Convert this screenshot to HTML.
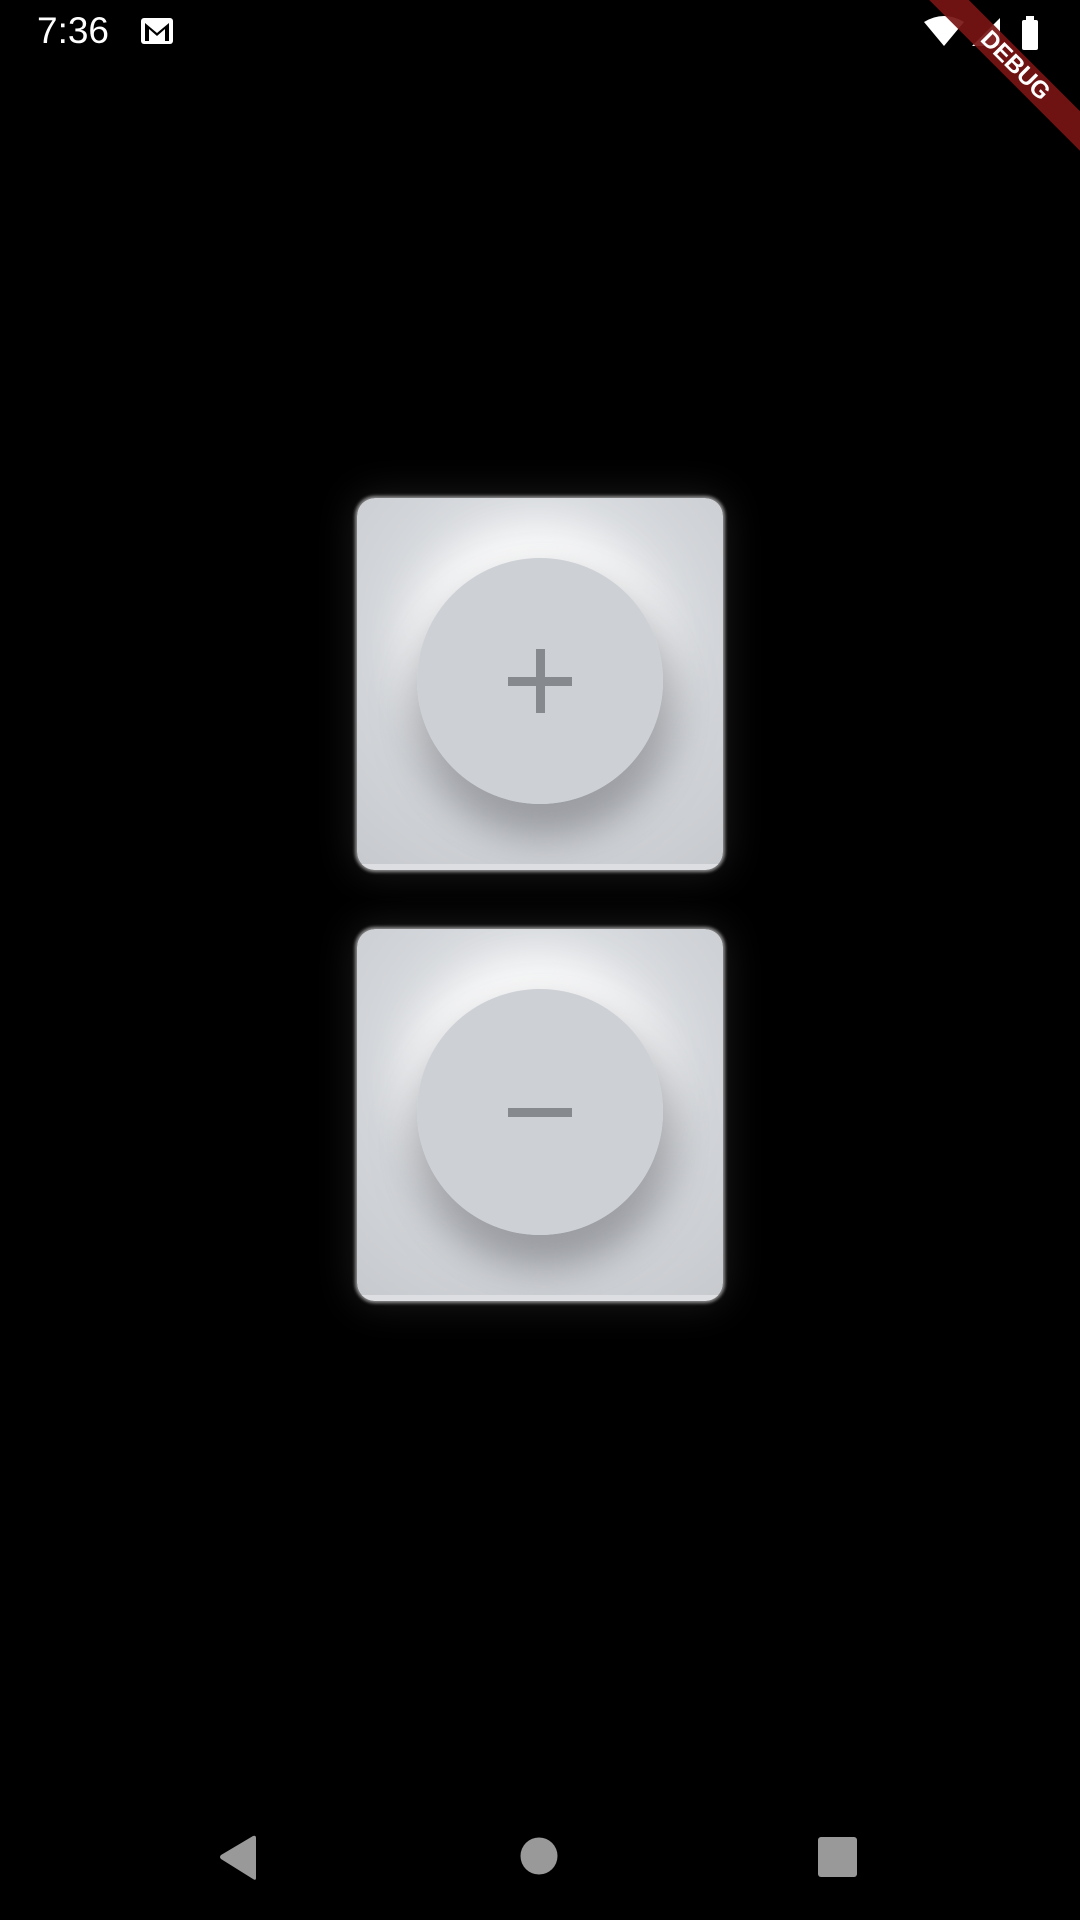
<!DOCTYPE html>
<html><head><meta charset="utf-8"><style>
html,body{margin:0;padding:0;background:#000;width:1080px;height:1920px;overflow:hidden;position:relative;font-family:"Liberation Sans",sans-serif}
.card{position:absolute;left:357px;width:366px;height:372px;border-radius:18px;
background:radial-gradient(circle at 50% 38%, #f1f2f3 0%, #e2e4e7 35%, #d2d5d9 60%, #c6c9cd 100%);
box-shadow:0 0 3px 2px rgba(255,255,255,0.55),0 0 40px 4px rgba(255,255,255,0.10);overflow:hidden}
.card:after{content:"";position:absolute;left:0;right:0;bottom:0;height:6px;background:#dcdee1}
.shadow{position:absolute;left:60px;top:60px;width:246px;height:246px;border-radius:50%;
box-shadow:4px 26px 40px 6px rgba(110,112,118,0.6),-4px -24px 40px 6px rgba(255,255,255,0.85)}
.btn{position:absolute;left:60px;top:60px;width:246px;height:246px;border-radius:50%;background:#cdd0d5}
.h{position:absolute;left:91px;top:119px;width:64px;height:9px;background:#868a8f}
.v{position:absolute;left:119px;top:91px;width:9px;height:64px;background:#868a8f}
</style></head><body>
<div style="position:absolute;left:37px;top:10px;color:#fff;font-size:37px;">7:36</div>
<svg style="position:absolute;left:140px;top:17px" width="34" height="28" viewBox="0 0 34 28"><rect x="1" y="1" width="32" height="26" rx="3" fill="#fff"/><path d="M5 24V6l12 10 12-10v18h-4V12l-8 7-8-7v12z" fill="#000"/></svg>
<svg style="position:absolute;left:920px;top:14px" width="120" height="36" viewBox="0 0 120 36">
<path d="M4 8 Q24 -4 44 8 L24 32 Z" fill="#fff"/>
<path d="M52 32 L80 32 L80 4 Z" fill="#fff"/>
<rect x="102" y="6" width="16" height="30" rx="2" fill="#fff"/><rect x="106" y="2" width="8" height="5" fill="#fff"/>
</svg>
<div style="position:absolute;left:865px;top:52px;width:300px;height:28px;background:rgba(120,20,20,0.92);transform:rotate(45deg);color:#fff;font-weight:bold;font-size:24px;text-align:center;line-height:28px">DEBUG</div>
<div class="card" style="top:498px"><div class="shadow"></div><div class="btn"></div><div class="btn" style="background:none"><div class="h"></div><div class="v"></div></div></div>
<div class="card" style="top:929px"><div class="shadow"></div><div class="btn"></div><div class="btn" style="background:none"><div class="h"></div></div></div>
<svg style="position:absolute;left:0;top:1830px" width="1080" height="60">
<path d="M256 8 L256 48 Q256 51 253 49 L221 29 Q219 27 221 25 L253 6 Q256 5 256 8Z" fill="#999"/>
<circle cx="539" cy="26" r="18.5" fill="#999"/>
<rect x="818" y="7" width="39" height="40" rx="3" fill="#999"/>
</svg>
</body></html>
